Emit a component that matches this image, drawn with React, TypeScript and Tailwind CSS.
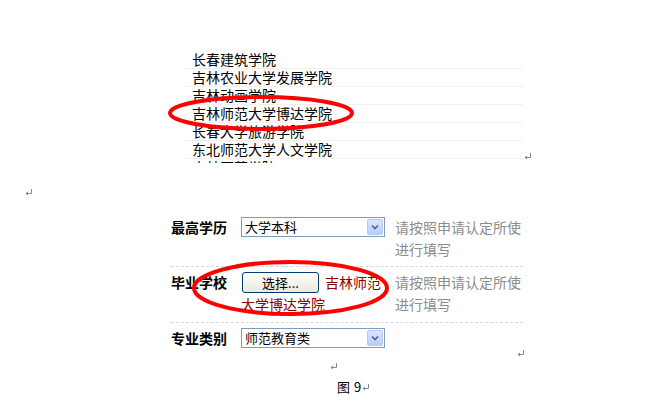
const schools = [
  '长春建筑学院',
  '吉林农业大学发展学院',
  '吉林动画学院',
  '吉林师范大学博达学院',
  '长春大学旅游学院',
  '东北师范大学人文学院',
  '吉林医药学院',
]

function ReturnMark() {
  return (
    <svg width="8" height="7" viewBox="0 0 8 7" className="block" fill="none">
      <path d="M6.5 0v4.5H1.5" stroke="#8a8a8a" strokeWidth="1" />
      <path d="M0.5 4.5l2.5-2v4z" fill="#8a8a8a" />
    </svg>
  )
}

function Select({ value }: { value: string }) {
  return (
    <div className="flex h-[20px] w-[144px] border border-[#7f9db9] bg-white">
      <span className="flex-1 pl-[3px] text-[13px] leading-[18px] text-black">{value}</span>
      <span className="m-[1px] flex w-[16px] items-center justify-center rounded-[2px] border border-[#b4c8f3] bg-gradient-to-b from-[#dbe6fe] to-[#b8cdfa]">
        <svg width="8" height="6" viewBox="0 0 8 6" fill="none">
          <path d="M1 1.5l3 3 3-3" stroke="#4d6185" strokeWidth="1.6" />
        </svg>
      </span>
    </div>
  )
}

export default function App() {
  return (
    <div className="relative h-[402px] w-[666px] overflow-hidden bg-white pt-[51px] font-['Noto_Sans_CJK_SC',sans-serif] text-black">
      {/* school list */}
      <div className="flex items-end">
        <div className="ml-[185px] h-[112px] w-[338px] overflow-hidden">
          {schools.map((s) => (
            <div key={s} className="h-[18px] border-b border-[#f0f0f0] pl-[7px] text-[14px] leading-[17px]">
              {s}
            </div>
          ))}
        </div>
        <div className="mb-[3px] ml-[1px]">
          <ReturnMark />
        </div>
      </div>

      <div className="ml-[25px] mt-[26px]">
        <ReturnMark />
      </div>

      {/* form */}
      <div className="ml-[171px] mt-[20px] w-[352px]">
        <div className="flex pb-[6px]">
          <div className="w-[70px] text-[14px] font-bold leading-[22px]">最高学历</div>
          <div className="w-[144px] pt-[1px]">
            <Select value="大学本科" />
          </div>
          <div className="ml-[10px] w-[128px] text-[14px] leading-[22px] text-[#8c8c8c]">请按照申请认定所使进行填写</div>
        </div>
        <div className="border-t border-dashed border-[#d8d8d8]" />
        <div className="flex pb-[7px] pt-[4px]">
          <div className="w-[70px] text-[14px] font-bold leading-[22px]">毕业学校</div>
          <div className="w-[144px] text-[14px] leading-[22px] text-[#8b0000]">
            <button className="ml-[1px] mr-[6px] mt-[1px] inline-block h-[21px] w-[77px] rounded-[3px] border border-[#003c74] bg-gradient-to-b from-white to-[#ece9d8] align-top text-[13px] leading-[19px] text-black">
              选择...
            </button>
            吉林师范大学博达学院
          </div>
          <div className="ml-[10px] w-[128px] text-[14px] leading-[22px] text-[#8c8c8c]">请按照申请认定所使进行填写</div>
        </div>
        <div className="border-t border-dashed border-[#d8d8d8]" />
        <div className="flex pt-[4px]">
          <div className="w-[70px] text-[14px] font-bold leading-[22px]">专业类别</div>
          <div className="w-[144px] pt-[1px]">
            <Select value="师范教育类" />
          </div>
        </div>
      </div>

      <div className="ml-[517px] mt-[1px]">
        <ReturnMark />
      </div>
      <div className="ml-[330px] mt-[6px]">
        <ReturnMark />
      </div>
      <div className="ml-[337px] mt-[9px] flex items-center text-[13px] leading-[16px]">
        <span>图</span>
        <span className="ml-[4px]">9</span>
        <span className="ml-[1px]">
          <ReturnMark />
        </span>
      </div>

      {/* red annotation circles */}
      <svg className="pointer-events-none absolute left-0 top-0" width="666" height="402" fill="none">
        <ellipse cx="261" cy="113" rx="91" ry="16" stroke="#f00" strokeWidth="4" />
        <ellipse cx="290.5" cy="288" rx="96.5" ry="26" stroke="#f00" strokeWidth="4" />
      </svg>
    </div>
  )
}
